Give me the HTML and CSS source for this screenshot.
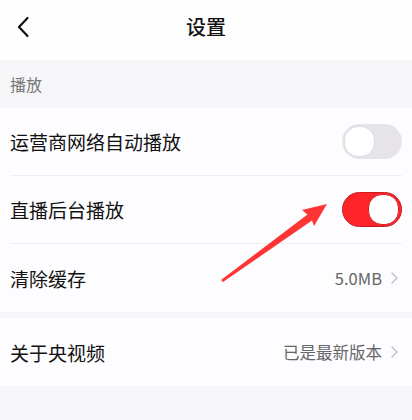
FILE: index.html
```html
<!DOCTYPE html>
<html lang="zh-CN">
<head>
<meta charset="utf-8">
<link rel="stylesheet" href="styles.css">
</head>
<body>
<div class="page">
  <header class="topbar">
    <svg class="back" width="14" height="22" viewBox="0 0 14 22"><path d="M11.5 2 L3 11 L11.5 20" fill="none" stroke="#111" stroke-width="2.2" stroke-linecap="round" stroke-linejoin="round"/></svg>
    <div class="title">设置</div>
  </header>
  <div class="section-label">播放</div>
  <div class="group">
    <div class="row divided">
      <span class="label">运营商网络自动播放</span>
      <span class="switch"><span class="knob"></span></span>
    </div>
    <div class="row divided">
      <span class="label">直播后台播放</span>
      <span class="switch on"><span class="knob"></span></span>
    </div>
    <div class="row nav">
      <span class="label">清除缓存</span>
      <span class="value">5.0MB<svg class="chev" width="7" height="12" viewBox="0 0 7 12"><path d="M1 1 L6 6 L1 11" fill="none" stroke="#bdbdc2" stroke-width="1.3" stroke-linecap="round" stroke-linejoin="round"/></svg></span>
    </div>
  </div>
  <div class="group gap">
    <div class="row nav">
      <span class="label">关于央视频</span>
      <span class="value">已是最新版本<svg class="chev" width="7" height="12" viewBox="0 0 7 12"><path d="M1 1 L6 6 L1 11" fill="none" stroke="#bdbdc2" stroke-width="1.3" stroke-linecap="round" stroke-linejoin="round"/></svg></span>
    </div>
  </div>
  <svg class="arrow" width="412" height="420" viewBox="0 0 412 420"><polygon points="327,204 314,226 312,220.5 223,282 221,280 307.5,214.5 302,210" fill="#ff3535"/></svg>
</div>
</body>
</html>
```
FILE: styles.css
```css
html, body {
  margin: 0;
  padding: 0;
}
body {
  background: #f6f6f8;
  font-family: "Noto Sans CJK SC", "Noto Sans", sans-serif;
  color: #111;
}
.page {
  position: relative;
  width: 412px;
  height: 420px;
  overflow: hidden;
}
.topbar {
  height: 60px;
  background: #fefefe;
  display: flex;
  align-items: center;
  justify-content: center;
  position: relative;
}
.back {
  position: absolute;
  left: 16px;
  top: 16px;
}
.title {
  font-size: 20px;
  font-weight: 500;
  color: #111;
  line-height: 1;
  margin-top: -6px;
}
.section-label {
  height: 48px;
  display: flex;
  align-items: center;
  padding-left: 10px;
  font-size: 16px;
  color: #777;
}
.group {
  background: #fdfcfe;
}
.group.gap {
  margin-top: 6px;
}
.row {
  height: 68px;
  margin: 0 10px;
  display: flex;
  align-items: center;
  justify-content: space-between;
  box-sizing: border-box;
}
.row.divided {
  border-bottom: 1px solid #efeef1;
}
.row.nav {
  margin-right: 14px;
}
.label {
  font-size: 19px;
  color: #111;
}
.value {
  font-size: 16.5px;
  color: #666;
  display: flex;
  align-items: center;
  gap: 9px;
}
.switch {
  width: 60px;
  height: 35px;
  border-radius: 18px;
  background: #e6e4e8;
  box-sizing: border-box;
  padding: 2px;
  display: flex;
  align-items: center;
}
.switch .knob {
  width: 31px;
  height: 31px;
  border-radius: 14px;
  background: #fff;
  box-sizing: border-box;
  border: 1px solid #dcdadf;
}
.switch.on {
  background: #ff2429;
  border: 1px solid #c81c22;
  justify-content: flex-end;
  padding: 1px 2px;
}
.switch.on .knob {
  border-color: #d42026;
}
.arrow {
  position: absolute;
  left: 0;
  top: 0;
  pointer-events: none;
}
```
